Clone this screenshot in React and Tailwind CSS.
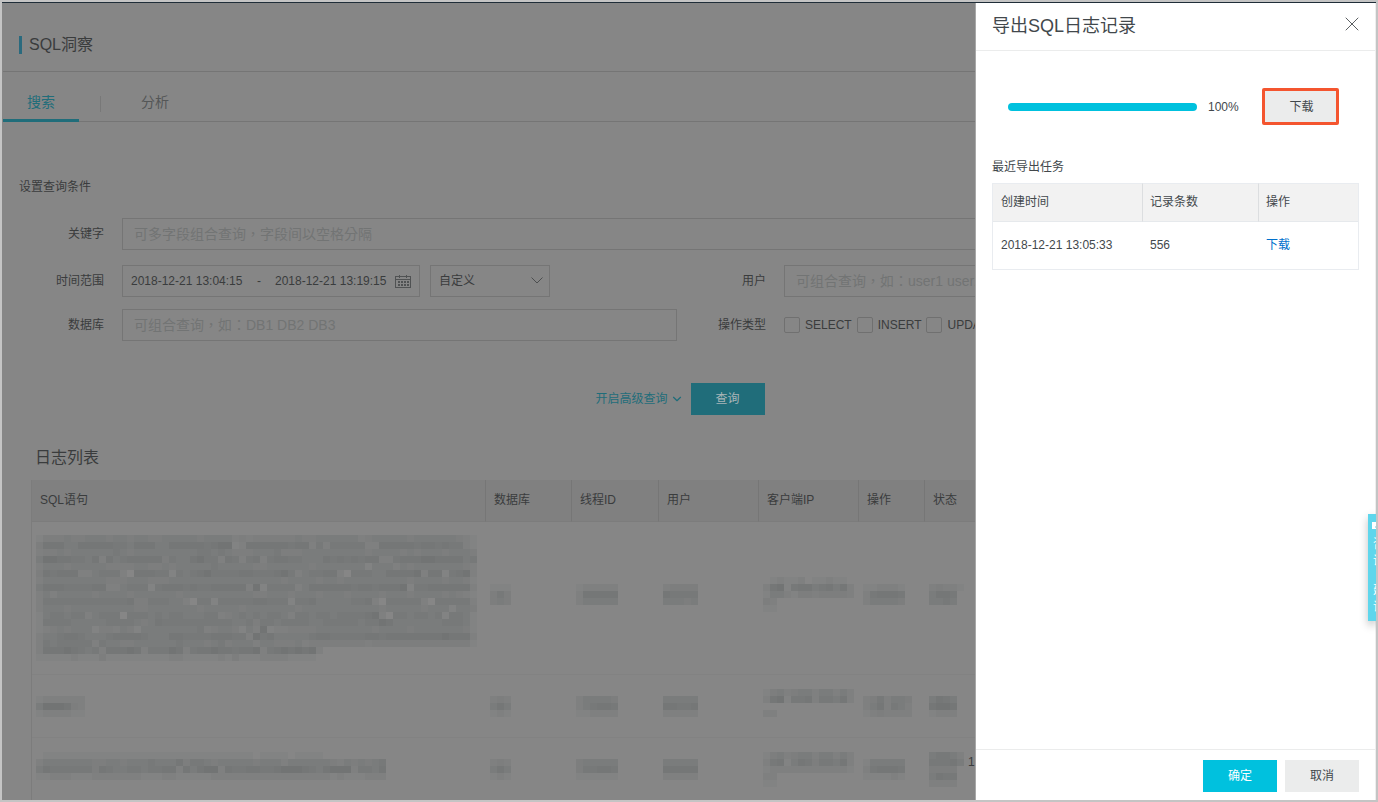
import { ChevronDown, X } from 'lucide-react';

const CELL = 7;

// Each string is one row of blocks, each digit is how dark the block is
const SQL_LONG = [
  '133343344434434433444443444423233333343344444423444443444444321',
  '366644666665546664466666567712666666566252555552266666566565521',
  '233434444445434444444445545433344453334444444443444434344434443',
  '477665546264566666354467552652562566554446565656622566677666645',
  '244434444433334433434444454444433444444344444441444243444444432',
  '365666224555206665515456755556655567524556620555446666726615672',
  '244444444433344433344444444444444443444434434444444443444434431',
  '466655556622455515666565566666271555524666666566566671556666662',
  '242444443444434444443444444444433444344434443444434443444434321',
  '255555555555563355544205515555566555155644444556205555520555552',
  '244434444444443344444443444443444444434444444444434444434441443',
  '145545524555055545455444552345454554255455455556720554554515541',
  '155554444455554346555555555544535545555445555545576444444455541',
  '123434441332431444444445234431427122333344444444344443444444431',
  '244566544456666544466555566655275644444566555556656666666676662',
  '254555552544334444445444345344424433342333333332333333333333331',
  '266676545266676255576256676656672567676720000000000000000000000',
  '111112111311111111122111112131112222111100000000000000000000000',
];

const LOGS = [
  {
    height: 'h-[153px]',
    sql: SQL_LONG,
    db: ['000', '111', '353', '343', '000', '000'],
    thread: ['000000', '122222', '266666', '244444', '000000', '000000'],
    user: ['000000', '233330', '655550', '444340', '000000', '000000'],
    ip: ['0121120112110', '2671566456462', '1442133233332', '3200000000000', '1100000000000', '0000000000000'],
    op: ['000000', '112221', '256665', '244443', '000000', '000000'],
    status: ['00000', '23221', '46650', '44540', '00000', '00000'],
  },
  {
    height: 'h-[63px]',
    sql: ['0000000', '1222222', '4777632', '1222211', '0000000'],
    db: ['000', '232', '464', '121', '000'],
    thread: ['000000', '244443', '245665', '112222', '000000'],
    user: ['000000', '444440', '665560', '222220', '000000'],
    ip: ['1342344244242', '2671556255462', '0000000000000', '2200000000000', '0000000000000'],
    op: ['0000000', '2352443', '2462542', '1232222', '0000000'],
    status: ['00000', '46540', '67760', '12220', '00000'],
  },
  {
    height: 'h-[63px]',
    sql: [
      '01111111111111111111111111111110111101111000000000',
      '24444444334434445444635543444443444244444432434345',
      '46555555365445545566264677265566556777654677725546',
      '11222111222222211122111112222222222222222212111222',
      '00000000000000000000000000000000000000000000000000',
    ],
    db: ['000', '232', '464', '121', '000'],
    thread: ['000000', '344444', '355665', '111111', '000000'],
    user: ['000000', '444440', '666660', '222220', '000000'],
    ip: ['1342344244242', '2561465355462', '1222222222221', '2200000000000', '1100000000000'],
    op: ['000000', '144444', '256665', '111121', '000000'],
    status: ['45542', '55564', '33330', '46550', '22220'],
    note: '1',
  },
];

const COLUMNS = [
  { key: 'sql', label: 'SQL语句', width: 'w-[454px]' },
  { key: 'db', label: '数据库', width: 'w-[86px]' },
  { key: 'thread', label: '线程ID', width: 'w-[87px]' },
  { key: 'user', label: '用户', width: 'w-[100px]' },
  { key: 'ip', label: '客户端IP', width: 'w-[100px]' },
  { key: 'op', label: '操作', width: 'w-[66px]' },
  { key: 'status', label: '状态', width: '' },
];

const Mosaic = ({ rows }) => {
  const cols = Math.max(...rows.map((r) => r.length));
  return (
    <svg
      className="block shrink-0"
      width={cols * CELL}
      height={rows.length * CELL}
      shapeRendering="crispEdges"
      aria-hidden="true"
    >
      {rows.map((row, y) =>
        [...row].map((level, x) => (
          <rect
            key={`${x}-${y}`}
            x={x * CELL}
            y={y * CELL}
            width={CELL}
            height={CELL}
            fill="#666a6a"
            opacity={Number(level) / 11}
          />
        ))
      )}
    </svg>
  );
};

const CalendarIcon = () => (
  <svg width="16" height="13" viewBox="0 0 16 13" fill="none" stroke="#505253" shapeRendering="crispEdges">
    <path d="M0.5 1.5H15.5V12.5H0.5Z M0 4.5H16" />
    <path d="M4.5 0V3 M11.5 0V3" />
    <path d="M3 7H5 M6 7H8 M9 7H11 M12 7H14 M3 10H5 M6 10H8 M9 10H11 M12 10H14" strokeWidth="2" />
  </svg>
);

const Field = ({ id, label, children }) => (
  <div className="flex items-center">
    <label htmlFor={id} className="w-[89px] mr-[18px] shrink-0 text-right">
      {label}
    </label>
    {children}
  </div>
);

const inputClass =
  "h-8 min-w-0 flex-1 border border-[#757575] px-[11px] text-sm outline-none placeholder:text-[#727474] placeholder:font-['Liberation_Sans','Noto_Sans_CJK_TC',sans-serif]";

const SearchForm = () => (
  <form className="pl-3" onSubmit={(e) => e.preventDefault()}>
    <div className="pr-[37px]">
      <Field id="keyword" label="关键字">
        <input id="keyword" className={inputClass} placeholder="可多字段组合查询，字段间以空格分隔" />
      </Field>
      <div className="grid grid-cols-2 gap-y-3 mt-[15px]">
        <Field id="start" label="时间范围">
          <div className="flex h-8 w-[298px] items-center border border-[#757575] px-2">
            <input id="start" className="w-28 outline-none" defaultValue="2018-12-21 13:04:15" />
            <span className="w-8 text-center">-</span>
            <input aria-label="结束时间" className="w-28 outline-none" defaultValue="2018-12-21 13:19:15" />
            <span className="ml-2">
              <CalendarIcon />
            </span>
          </div>
          <div className="relative ml-2.5">
            <select
              aria-label="时间类型"
              className="h-8 w-[120px] appearance-none border border-[#757575] px-2 outline-none"
            >
              <option>自定义</option>
            </select>
            <svg
              className="pointer-events-none absolute right-[7px] top-3"
              width="12"
              height="7"
              viewBox="0 0 12 7"
              fill="none"
              stroke="#4c4e4f"
            >
              <path d="M0.5 0.5L6 6L11.5 0.5" />
            </svg>
          </div>
        </Field>
        <Field id="user" label="用户">
          <input id="user" className={inputClass} placeholder="可组合查询，如：user1 user2 user3" />
        </Field>
        <Field id="database" label="数据库">
          <input id="database" className={inputClass} placeholder="可组合查询，如：DB1 DB2 DB3" />
        </Field>
        <Field id="op-SELECT" label="操作类型">
          <div className="flex items-center gap-[5px]">
            {['SELECT', 'INSERT', 'UPDATE', 'DELETE'].map((op) => (
              <span key={op} className="flex items-center gap-[5px]">
                <input
                  type="checkbox"
                  id={`op-${op}`}
                  className="size-4 appearance-none rounded-[2px] border border-[#707070]"
                />
                <label htmlFor={`op-${op}`}>{op}</label>
              </span>
            ))}
          </div>
        </Field>
      </div>
    </div>
    <div className="mt-[42px] mr-[31px] flex items-center justify-center">
      <button type="button" className="mr-[7px] flex items-center gap-0.5 text-[#1f6d7a]">
        开启高级查询
        <ChevronDown size={14} strokeWidth={2} />
      </button>
      <button type="submit" className="h-8 w-[74px] bg-[#206d7a] text-[#a9b5b8]">
        查询
      </button>
    </div>
  </form>
);

const LogTable = () => (
  <section className="mt-[31px] pl-7 pr-4">
    <h2 className="pl-1 text-base leading-6">日志列表</h2>
    <table className="mt-[10px] w-full table-fixed border-separate border-spacing-0 border-l border-[#7c7c7c]">
      <thead>
        <tr className="bg-[#808080]">
          {COLUMNS.map((col) => (
            <th
              key={col.key}
              className={`${col.width} h-[42px] border-b border-r border-[#767676] border-b-[#7c7c7c] pb-0.5 pl-2 text-left font-normal`}
            >
              {col.label}
            </th>
          ))}
        </tr>
      </thead>
      <tbody>
        {LOGS.map((log, i) => (
          <tr key={i}>
            {COLUMNS.map(({ key }) => (
              <td key={key} className={`${log.height} border-b border-[#828282] py-0 pl-1`}>
                <div className="flex">
                  <Mosaic rows={log[key]} />
                  {key === 'status' && log.note && <span className="pl-1">{log.note}</span>}
                </div>
              </td>
            ))}
          </tr>
        ))}
      </tbody>
    </table>
  </section>
);

const ExportDrawer = () => (
  <aside
    role="dialog"
    aria-labelledby="drawer-title"
    className="absolute inset-y-0 right-0 flex w-[401px] flex-col border-l border-r border-l-[#a8a8a8] border-r-[#eeeeee] bg-white text-[#42484c]"
  >
    <header className="flex h-12 items-center justify-between border-b border-[#ebecec] px-4">
      <h2 id="drawer-title" className="pb-0.5 text-lg leading-6">
        导出SQL日志记录
      </h2>
      <button type="button" aria-label="关闭" className="mb-1.5 text-[#5b5f62]">
        <X size={24} strokeWidth={1} className="-mr-[5px]" />
      </button>
    </header>

    <div className="flex-1 px-4 pt-[37px]">
      <div className="flex items-center pl-4 pr-5">
        <div
          role="progressbar"
          aria-valuenow={100}
          aria-label="导出进度"
          className="h-2 flex-1 rounded-full bg-[#00c1de]"
        ></div>
        <span className="w-[65px] pl-[11px]">100%</span>
        <button
          type="button"
          className="h-[37px] w-[77px] rounded-[2px] border-3 border-[#f4552f] bg-[#ebecec] pl-0.5"
        >
          下载
        </button>
      </div>

      <h3 className="mt-8 mb-[6px]">最近导出任务</h3>
      <table className="w-full table-fixed border-separate border-spacing-0 border border-t-0 border-[#e9ecf0]">
        <thead>
          <tr className="h-[39px] bg-[#f2f2f2] text-left">
            <th className="w-[150px] border-r border-b border-t border-[#dcdee0] border-b-[#e6e9ec] border-t-[#e9ecf0] pb-0.5 pl-2 font-normal">
              创建时间
            </th>
            <th className="w-[116px] border-r border-b border-t border-[#dcdee0] border-b-[#e6e9ec] border-t-[#e9ecf0] pb-0.5 pl-[7px] font-normal">
              记录条数
            </th>
            <th className="border-b border-t border-b-[#e6e9ec] border-t-[#e9ecf0] pb-0.5 pl-[7px] font-normal">
              操作
            </th>
          </tr>
        </thead>
        <tbody>
          <tr className="h-[47px]">
            <td className="pb-0.5 pl-2">2018-12-21 13:05:33</td>
            <td className="pb-0.5 pl-[7px]">556</td>
            <td className="pb-0.5 pl-[7px]">
              <a href="#download" className="text-[#0070cc]">
                下载
              </a>
            </td>
          </tr>
        </tbody>
      </table>
    </div>

    <footer className="flex justify-end gap-2 border-t border-[#ebecec] px-4 pt-[10px] pb-2">
      <button type="button" className="h-8 w-[74px] bg-[#00c1de] text-white">
        确定
      </button>
      <button type="button" className="h-8 w-[74px] bg-[#ebecec]">
        取消
      </button>
    </footer>
  </aside>
);

const FeedbackTab = () => (
  <a
    href="#feedback"
    className="absolute top-[511px] right-0 flex h-[107px] w-2 flex-col overflow-hidden bg-[#5fd6ec] pl-[5px] pt-1.5 text-xs leading-[17px] text-white shadow-[0_4px_8px_rgba(0,0,0,0.25)]"
  >
    <svg className="-ml-0.5 mb-1 shrink-0" width="16" height="12" viewBox="0 0 16 12">
      <path d="M1 2H15V9H9L6 12V9H1Z" fill="#fff" />
      <path d="M4 7H12" stroke="#5fd6ec" />
    </svg>
    <span className="w-3 shrink-0">咨询</span>
    <span className="mt-3 w-3 shrink-0">建议</span>
  </a>
);

const App = () => {
  return (
    <div className="h-screen border-2 border-[#c4c4c4] font-['Liberation_Sans','Noto_Sans_CJK_SC',sans-serif] text-xs leading-5 text-[#3a3c3d]">
      <div className="relative h-full overflow-hidden border-t border-[#1f2d38] bg-[#868686]">
        <main className="pl-px">
          <header className="flex h-[69px] items-center border-b border-[#757575] pl-4 pt-4">
            <h1 className="flex items-center gap-[7px] text-base leading-6">
              <span className="h-[18px] w-[3px] bg-[#2a6a7e]"></span>
              SQL洞察
            </h1>
          </header>

          <nav className="flex h-[50px] items-stretch border-b border-[#757575] text-sm">
            <a href="#search" className="-mb-px border-b-3 border-[#206d7a] px-6 pt-5 text-[#206d7a]">
              搜索
            </a>
            <span className="mt-6 ml-[21px] h-4 w-px bg-[#787878]"></span>
            <a href="#analysis" className="ml-10 pt-5 text-[#545657]">
              分析
            </a>
          </nav>

          <h2 className="mt-[55px] mb-[21px] pl-4">设置查询条件</h2>
          <SearchForm />
          <LogTable />
        </main>

        <ExportDrawer />
        <FeedbackTab />
      </div>
    </div>
  );
};

export default App;
